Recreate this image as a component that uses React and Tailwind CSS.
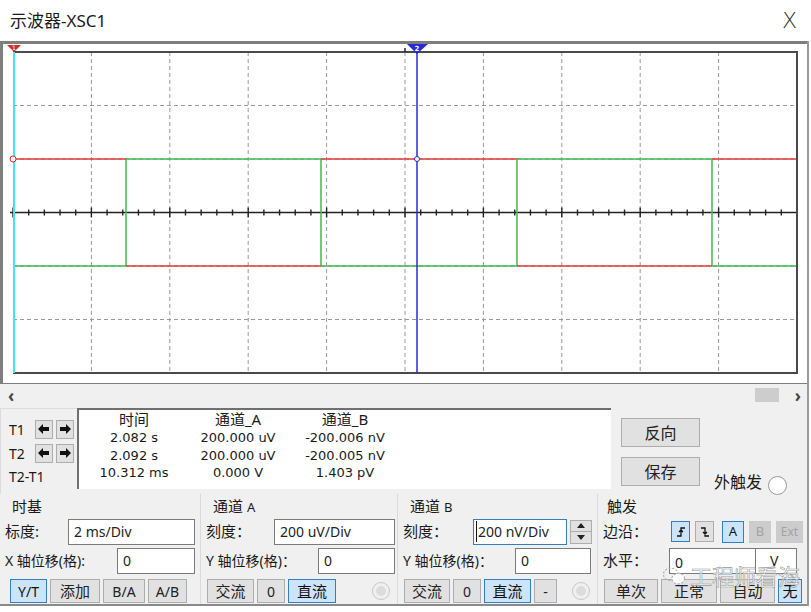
import React from 'react';

const FONT = { fontFamily: '"Noto Sans", "Noto Sans CJK SC", sans-serif' };
const DATA_FONT = { fontFamily: '"DejaVu Sans", "Noto Sans CJK SC", sans-serif' };

// oscilloscope plot geometry (svg coords)
const X0 = 10;
const X1 = 794;
const Y0 = 8;
const Y1 = 329;
const DX = (X1 - X0) / 10;
const DY = (Y1 - Y0) / 6;
const HI = Y0 + DY * 2;
const LO = Y0 + DY * 4;
const MID = Y0 + DY * 3;
const EDGES = [X0, 123, 318, 514, 709, X1];

function Scope() {
  const ticks = [];
  for (let i = 0; i <= 50; i++) {
    const x = X0 + (DX / 5) * i;
    const len = i % 5 === 0 ? 5 : 3;
    ticks.push(<line key={i} x1={x} x2={x} y1={MID - len} y2={MID + len} stroke="#222" strokeWidth="1.4" />);
  }
  const red = [];
  const green = [];
  for (let i = 0; i < EDGES.length - 1; i++) {
    const a = EDGES[i];
    const b = EDGES[i + 1];
    const redY = i % 2 === 0 ? HI : LO;
    const greenY = i % 2 === 0 ? LO : HI;
    red.push(<line key={'r' + i} x1={a} x2={b} y1={redY} y2={redY} stroke="#e23b3b" strokeWidth="1.5" />);
    green.push(<line key={'g' + i} x1={a} x2={b} y1={greenY} y2={greenY} stroke="#3dba4e" strokeWidth="1.5" />);
    if (i > 0) green.push(<line key={'v' + i} x1={a} x2={a} y1={HI} y2={LO} stroke="#3dba4e" strokeWidth="1.5" />);
  }
  return (
    <svg width="805" height="339" className="block">
      <rect x={X0} y={Y0} width={X1 - X0} height={Y1 - Y0} fill="#fff" />
      {Array.from({ length: 9 }, (_, i) => (
        <line key={'vx' + i} x1={X0 + DX * (i + 1)} x2={X0 + DX * (i + 1)} y1={Y0} y2={Y1} stroke="#9a9a9a" strokeWidth="1" strokeDasharray="4 3" />
      ))}
      {[1, 2, 4, 5].map((i) => (
        <line key={'hy' + i} x1={X0} x2={X1} y1={Y0 + DY * i} y2={Y0 + DY * i} stroke="#9a9a9a" strokeWidth="1" strokeDasharray="4 3" />
      ))}
      <line x1={X0 - 3} x2={X1} y1={MID} y2={MID} stroke="#222" strokeWidth="1.5" />
      {ticks}
      {green}
      {red}
      <path d={`M${X0} ${Y0} H${X1} V${Y1} H${X0}`} fill="none" stroke="#4a4a4a" strokeWidth="2" />
      <line x1={402} x2={402} y1={4} y2={Y0} stroke="#222" strokeWidth="1.5" />
      {/* cursor 1 */}
      <line x1={11} x2={11} y1={Y0} y2={Y1} stroke="#45e3f0" strokeWidth="2" />
      <polygon points="4,1 18,1 11,8" fill="#d0302a" />
      <text x="11" y="6" fontSize="6" fill="#fff" textAnchor="middle" fontFamily="DejaVu Sans">1</text>
      <circle cx={10} cy={HI} r="3" fill="#fff" stroke="#d0302a" strokeWidth="1" />
      {/* cursor 2 */}
      <line x1={414} x2={414} y1={Y0} y2={Y1} stroke="#2a2ad8" strokeWidth="1.5" />
      <polygon points="404,0 425,0 414,10" fill="#2a2ad8" />
      <text x="414" y="7" fontSize="7" fill="#fff" textAnchor="middle" fontWeight="bold" fontFamily="DejaVu Sans">2</text>
      <circle cx={414} cy={HI} r="2.5" fill="#fff" stroke="#2a2ad8" strokeWidth="1" />
    </svg>
  );
}

function Btn({ children, active, disabled, className = '' }) {
  const look = active
    ? 'bg-[#cce4f7] border-[#2f7fc1] text-[#111]'
    : disabled
    ? 'bg-[#cccccc] border-[#cccccc] text-[#a3a3a3]'
    : 'bg-[#e1e1e1] border-[#adadad] text-[#222]';
  return (
    <div className={`flex items-center justify-center border ${look} ${className}`}>{children}</div>
  );
}

function Input({ children, className = '', focus }) {
  return (
    <div className={`flex items-center bg-white border ${focus ? 'border-[#2f7fc1]' : 'border-[#7a7a7a]'} pl-[5px] text-[14px] text-[#222] ${className}`}>
      {children}
    </div>
  );
}

function Radio({ disabled }) {
  return (
    <div className={`w-[18px] h-[18px] rounded-full border ${disabled ? 'border-[#c8c8c8] bg-[#f0f0f0]' : 'border-[#888] bg-white'} flex items-center justify-center`}>
      {disabled && <div className="w-[10px] h-[10px] rounded-full bg-[#dcdcdc]" />}
    </div>
  );
}

function Arrow({ dir }) {
  return (
    <Btn className="w-[18px] h-[19px]">
      <svg width="12" height="10" viewBox="0 0 12 10">
        {dir === 'left' ? (
          <path d="M0 5 L5 0 L5 3 L11 3 L11 7 L5 7 L5 10 Z" fill="#111" />
        ) : (
          <path d="M12 5 L7 0 L7 3 L1 3 L1 7 L7 7 L7 10 Z" fill="#111" />
        )}
      </svg>
    </Btn>
  );
}

function EdgeIcon({ falling }) {
  return (
    <svg width="10" height="12" viewBox="0 0 10 12">
      {falling ? (
        <path d="M1 2 H5 V10 H9 M3 6 L5 8 L7 6" fill="none" stroke="#111" strokeWidth="1.3" />
      ) : (
        <path d="M1 10 H5 V2 H9 M3 6 L5 4 L7 6" fill="none" stroke="#111" strokeWidth="1.3" />
      )}
    </svg>
  );
}

export default function App() {
  return (
    <div className="w-[811px] h-[612px] bg-white overflow-hidden text-[#1a1a1a]" style={FONT}>
      {/* title bar */}
      <div className="h-[41px] flex items-center justify-between pl-[10px] pr-[14px] bg-white">
        <span className="text-[17px]">示波器-XSC1</span>
        <span className="text-[22px] font-light text-[#333]" style={{ fontFamily: '"DejaVu Sans", sans-serif' }}>X</span>
      </div>

      <div className="w-[809px] border-r-2 border-[#9a9a9a] bg-[#f0f0f0]">
        {/* scope display */}
        <div className="border-t-[3px] border-l-[3px] border-b border-[#7e7e7e] bg-white">
          <Scope />
        </div>

        {/* scrollbar */}
        <div className="h-[22px] flex items-center justify-between pl-[8px] pr-[6px] text-[17px] text-[#444]">
          <span className="font-bold leading-none">‹</span>
          <div className="flex items-center gap-[16px]">
            <div className="w-[24px] h-[14px] bg-[#cdcdcd]" />
            <span className="font-bold leading-none">›</span>
          </div>
        </div>

        {/* cursor readout */}
        <div className="h-[88px] flex pt-[2px]">
          <div className="w-[77px] border-t border-l border-[#dcdcdc] flex flex-col pl-[8px] pt-[8px] text-[14px]">
            <div className="flex items-center h-[24px]">
              <span className="w-[26px]">T1</span>
              <div className="flex gap-[3px]"><Arrow dir="left" /><Arrow dir="right" /></div>
            </div>
            <div className="flex items-center h-[24px]">
              <span className="w-[26px]">T2</span>
              <div className="flex gap-[3px]"><Arrow dir="left" /><Arrow dir="right" /></div>
            </div>
            <div className="h-[22px] flex items-center">T2-T1</div>
          </div>
          <div className="w-[534px] h-[81px] bg-white border-t-2 border-l-2 border-[#707070] flex text-[13px]" style={DATA_FONT}>
            <div className="w-[110px] flex flex-col items-center">
              <span className="text-[15px] leading-[19px]" style={FONT}>时间</span>
              <span className="leading-[17.5px]">2.082 s</span>
              <span className="leading-[17.5px]">2.092 s</span>
              <span className="leading-[17.5px]">10.312 ms</span>
            </div>
            <div className="w-[98px] flex flex-col items-center">
              <span className="text-[15px] leading-[19px]" style={FONT}>通道_A</span>
              <span className="leading-[17.5px]">200.000 uV</span>
              <span className="leading-[17.5px]">200.000 uV</span>
              <span className="leading-[17.5px]">0.000 V</span>
            </div>
            <div className="w-[116px] flex flex-col items-center">
              <span className="text-[15px] leading-[19px]" style={FONT}>通道_B</span>
              <span className="leading-[17.5px]">-200.006 nV</span>
              <span className="leading-[17.5px]">-200.005 nV</span>
              <span className="leading-[17.5px]">1.403 pV</span>
            </div>
          </div>
          <div className="flex flex-col gap-[10px] pl-[10px] pt-[10px]">
            <Btn className="w-[79px] h-[29px] text-[16px]">反向</Btn>
            <Btn className="w-[79px] h-[29px] text-[16px]">保存</Btn>
          </div>
          <div className="flex items-end gap-[6px] pl-[14px] pb-[2px]">
            <span className="text-[16px] leading-[20px]">外触发</span>
            <div className="w-[19px] h-[19px] rounded-full border border-[#999] bg-white -mb-[3px]" />
          </div>
        </div>

        {/* control groups */}
        <div className="h-[112px] flex border-b-2 border-[#8a8a8a] text-[15px]">
          {/* 时基 */}
          <div className="w-[201px] border-r border-[#dadada] flex flex-col pl-[5px] pt-[2px]">
            <div className="pl-[7px] h-[20px] leading-[20px]">时基</div>
            <div className="flex items-center h-[29px] mt-[1px]">
              <span className="w-[63px]">标度:</span>
              <Input className="w-[127px] h-[26px]">2 ms/Div</Input>
            </div>
            <div className="flex items-center h-[29px]">
              <span className="w-[112px] text-[14px]">X 轴位移(格):</span>
              <Input className="w-[78px] h-[26px]">0</Input>
            </div>
            <div className="flex items-center gap-[3px] mt-[4px] pl-[5px] text-[14px]">
              <Btn active className="w-[37px] h-[24px]">Y/T</Btn>
              <Btn className="w-[50px] h-[24px] text-[15px]">添加</Btn>
              <Btn className="w-[42px] h-[24px]">B/A</Btn>
              <Btn className="w-[39px] h-[24px]">A/B</Btn>
            </div>
          </div>

          {/* 通道 A */}
          <div className="w-[197px] border-r border-[#dadada] flex flex-col pl-[5px] pt-[2px]">
            <div className="pl-[7px] h-[20px] leading-[20px]">通道 <span className="text-[13px]">A</span></div>
            <div className="flex items-center h-[29px] mt-[1px]">
              <span className="w-[68px]">刻度：</span>
              <Input className="w-[121px] h-[26px]">200 uV/Div</Input>
            </div>
            <div className="flex items-center h-[29px]">
              <span className="w-[112px] text-[14px]">Y 轴位移(格)：</span>
              <Input className="w-[77px] h-[26px]">0</Input>
            </div>
            <div className="flex items-center gap-[3px] mt-[4px] pl-[1px] text-[14px]">
              <Btn className="w-[47px] h-[24px] text-[15px]">交流</Btn>
              <Btn className="w-[28px] h-[24px]">0</Btn>
              <Btn active className="w-[48px] h-[24px] text-[15px]">直流</Btn>
              <div className="ml-[33px]"><Radio disabled /></div>
            </div>
          </div>

          {/* 通道 B */}
          <div className="w-[200px] border-r border-[#dadada] flex flex-col pl-[5px] pt-[2px]">
            <div className="pl-[7px] h-[20px] leading-[20px]">通道 <span className="text-[13px]">B</span></div>
            <div className="flex items-center h-[29px] mt-[1px]">
              <span className="w-[70px]">刻度：</span>
              <Input focus className="w-[94px] h-[26px]"><span className="border-l border-[#111] pl-[1px] -ml-[3px]">200 nV/Div</span></Input>
              <div className="ml-[3px] w-[22px] h-[24px] flex flex-col border border-[#adadad] bg-[#e1e1e1]">
                <div className="flex-1 flex items-center justify-center border-b border-[#adadad]">
                  <svg width="8" height="5"><path d="M0 5 L4 0 L8 5 Z" fill="#222" /></svg>
                </div>
                <div className="flex-1 flex items-center justify-center">
                  <svg width="8" height="5"><path d="M0 0 L4 5 L8 0 Z" fill="#222" /></svg>
                </div>
              </div>
            </div>
            <div className="flex items-center h-[29px]">
              <span className="w-[112px] text-[14px]">Y 轴位移(格)：</span>
              <Input className="w-[76px] h-[26px]">0</Input>
            </div>
            <div className="flex items-center gap-[3px] mt-[4px] pl-[1px] text-[14px]">
              <Btn className="w-[46px] h-[24px] text-[15px]">交流</Btn>
              <Btn className="w-[28px] h-[24px]">0</Btn>
              <Btn active className="w-[47px] h-[24px] text-[15px]">直流</Btn>
              <Btn className="w-[23px] h-[24px]">-</Btn>
              <div className="ml-[12px]"><Radio disabled /></div>
            </div>
          </div>

          {/* 触发 */}
          <div className="relative flex-1 flex flex-col pl-[5px] pt-[2px]">
            <div className="pl-[4px] h-[20px] leading-[20px]">触发</div>
            <div className="flex items-center h-[29px] mt-[1px]">
              <span className="w-[68px]">边沿：</span>
              <div className="flex items-center gap-[5px]">
                <Btn active className="w-[19px] h-[21px]"><EdgeIcon /></Btn>
                <Btn className="w-[19px] h-[21px]"><EdgeIcon falling /></Btn>
                <Btn active className="w-[22px] h-[22px] ml-[3px] text-[13px]">A</Btn>
                <Btn disabled className="w-[22px] h-[22px] text-[13px]">B</Btn>
                <Btn disabled className="w-[27px] h-[22px] text-[12px]">Ext</Btn>
              </div>
            </div>
            <div className="flex items-center h-[29px]">
              <span className="w-[66px]">水平：</span>
              <Input className="w-[87px] h-[26px] pt-[4px]">0</Input>
              <Input className="w-[42px] h-[26px] pl-[14px] -ml-px">V</Input>
            </div>
            <div className="flex items-center gap-[3px] mt-[4px] pl-[1px]">
              <Btn className="w-[54px] h-[24px]">单次</Btn>
              <Btn className="w-[56px] h-[24px]">正常</Btn>
              <Btn className="w-[55px] h-[24px]">自动</Btn>
              <Btn active className="w-[24px] h-[24px]">无</Btn>
            </div>
            {/* watermark */}
            <div className="absolute left-[64px] top-[70px] flex items-center gap-[4px] pointer-events-none">
              <svg width="24" height="19" viewBox="0 0 22 18">
                <ellipse cx="8" cy="7" rx="7" ry="6" fill="none" stroke="#aaa" strokeWidth="1" strokeDasharray="2 1.5" />
                <ellipse cx="15" cy="11" rx="6" ry="5" fill="#fff" stroke="#aaa" strokeWidth="1" strokeDasharray="2 1.5" />
              </svg>
              <span className="text-[22px] leading-[24px] text-white/80" style={{ WebkitTextStroke: '0.6px #9a9a9a' }}>工程师看海</span>
            </div>
          </div>
        </div>
      </div>
    </div>
  );
}
